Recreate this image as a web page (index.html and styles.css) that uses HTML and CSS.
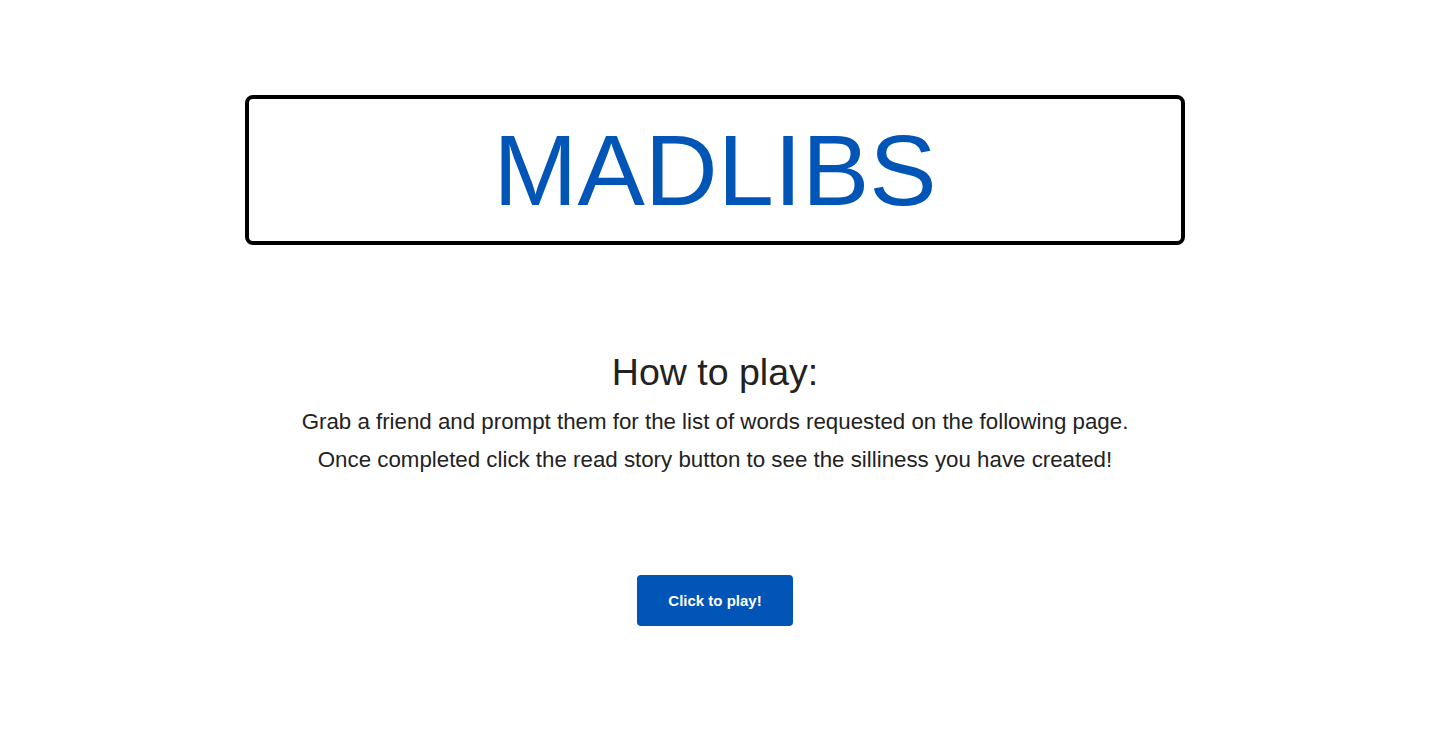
FILE: index.html
```html
<!DOCTYPE html>
<html>
<head>
<meta charset="utf-8">
<link rel="stylesheet" href="styles.css">
</head>
<body>
<div class="page">
  <header class="title-box">
    <h1 class="title">MADLIBS</h1>
  </header>
  <section class="intro">
    <h2 class="intro-heading">How to play:</h2>
    <p class="intro-text">Grab a friend and prompt them for the list of words requested on the following page.</p>
    <p class="intro-text">Once completed click the read story button to see the silliness you have created!</p>
  </section>
  <div class="actions">
    <button class="play-btn">Click to play!</button>
  </div>
</div>
</body>
</html>
```
FILE: styles.css
```css
html, body {
  margin: 0;
  padding: 0;
  background: #fff;
}
body {
  font-family: "Liberation Sans", Arial, sans-serif;
  color: #222;
}
.page {
  display: flex;
  flex-direction: column;
  align-items: center;
  padding-top: 95px;
}
.title-box {
  box-sizing: border-box;
  width: 940px;
  height: 150px;
  border: 4px solid #000;
  border-radius: 8px;
  display: flex;
  align-items: center;
  justify-content: center;
}
.title {
  margin: 0;
  font-weight: normal;
  font-size: 101px;
  line-height: 1;
  color: #0055b7;
}
.intro {
  margin-top: 103px;
  text-align: center;
}
.intro-heading {
  margin: 0 0 7px;
  font-weight: normal;
  font-size: 37.5px;
  line-height: 48px;
  color: #222;
}
.intro-text {
  margin: 0;
  font-size: 22.3px;
  line-height: 38px;
  color: #222;
}
.actions {
  margin-top: 96px;
}
.play-btn {
  width: 156px;
  height: 51px;
  border: none;
  border-radius: 4px;
  background: #0055b7;
  color: #fff;
  font-family: "Liberation Sans", Arial, sans-serif;
  font-size: 15px;
  font-weight: bold;
  cursor: pointer;
}
```
